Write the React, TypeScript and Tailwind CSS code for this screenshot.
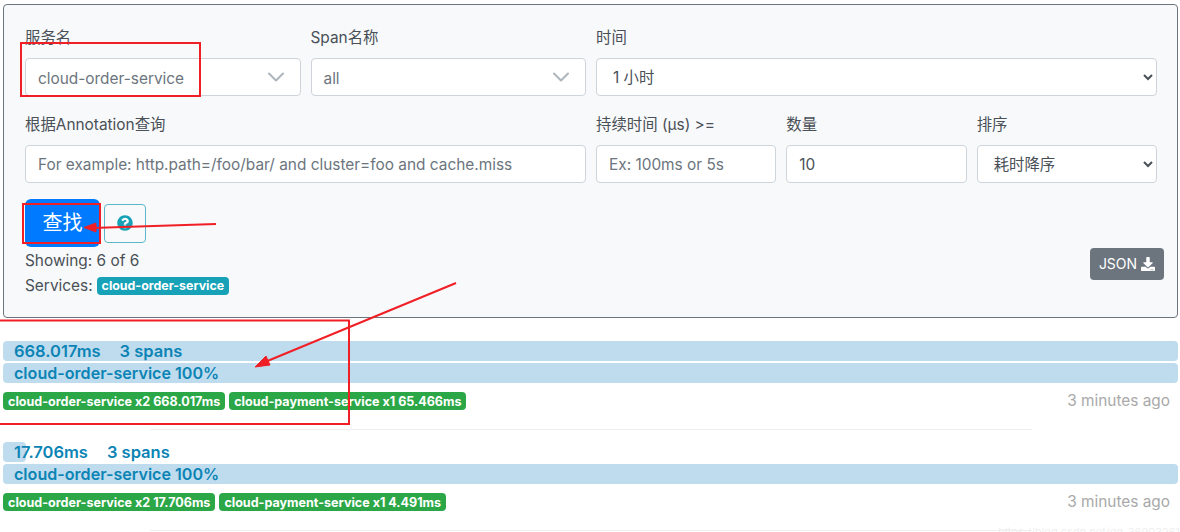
import { ChevronDown } from 'lucide-react';
import { FaDownload, FaQuestionCircle } from 'react-icons/fa';

const font = { fontFamily: 'Inter, "Noto Sans CJK SC", sans-serif' };

const inputClass =
  'h-[38px] w-full rounded border border-[#ced4da] bg-white px-3 text-[15.4px] text-[#495057] placeholder:text-[#6c757d] outline-none';

const traces = [
  {
    duration: '668.017ms',
    width: '100%',
    badges: ['cloud-order-service x2 668.017ms', 'cloud-payment-service x1 65.466ms'],
  },
  {
    duration: '17.706ms',
    width: '23px',
    badges: ['cloud-order-service x2 17.706ms', 'cloud-payment-service x1 4.491ms'],
  },
];

function Label({ children }: { children: string }) {
  return <label className="mb-2 block h-6 text-[15.4px] leading-6 text-[#495057]">{children}</label>;
}

function ComboBox({ value }: { value: string }) {
  return (
    <div className="flex h-[38px] items-center justify-between rounded border border-[#ced4da] bg-white pl-3 pr-[10px] text-[15.4px] text-[#6c757d]">
      <span className="pt-[3px]">{value}</span>
      <ChevronDown className="h-7 w-7 text-[#adb5bd]" strokeWidth={1.75} />
    </div>
  );
}

function TraceRow({ trace }: { trace: (typeof traces)[number] }) {
  return (
    <div className="relative h-[101px] pt-[23px]">
      <div className="relative ml-[3px] mr-[2px] h-5 text-[16.5px] font-semibold leading-5 text-[#0b84b5]">
        <div className="absolute inset-y-0 left-0 rounded bg-[#bfdcee]" style={{ width: trace.width }} />
        <div className="relative flex gap-[19px] pl-[11px]">
          <span>{trace.duration}</span>
          <span>3 spans</span>
        </div>
      </div>
      <div className="ml-[3px] mr-[2px] mt-[2px] h-5 rounded bg-[#bfdcee] pl-[11px] text-[16.1px] font-semibold leading-5 text-[#0b84b5]">
        cloud-order-service 100%
      </div>
      <div className="ml-[3px] mr-[2px] mt-[9px] flex items-start justify-between">
        <div className="flex gap-1">
          {trace.badges.map((badge) => (
            <span
              key={badge}
              className="h-[18px] rounded bg-[#2ca748] px-[5px] text-[12.55px] font-bold leading-[19px] text-white"
            >
              {badge}
            </span>
          ))}
        </div>
        <span className="mr-2 mt-[-3px] text-[15.4px] text-[#a9a9a9]">3 minutes ago</span>
      </div>
      <div className="absolute bottom-[-11px] left-[150px] h-px w-[882px] bg-[#eeeeee]" />
    </div>
  );
}

export default function App() {
  return (
    <div className="relative h-[532px] w-[1180px] overflow-hidden bg-white" style={font}>
      <div className="pl-[3px] pr-[2px] pt-1">
        <div className="h-[314px] rounded border border-[#6c757d] bg-[#f8f9fa] pl-[21px] pr-[20px] pt-[21px]">
          <div className="grid grid-cols-12 gap-x-[10px] gap-y-[17px]">
            <div className="col-span-3">
              <Label>服务名</Label>
              <ComboBox value="cloud-order-service" />
            </div>
            <div className="col-span-3">
              <Label>Span名称</Label>
              <ComboBox value="all" />
            </div>
            <div className="col-span-6">
              <Label>时间</Label>
              <select className={inputClass} defaultValue="1h">
                <option value="1h">1 小时</option>
              </select>
            </div>
            <div className="col-span-6">
              <Label>根据Annotation查询</Label>
              <input className={inputClass} placeholder="For example: http.path=/foo/bar/ and cluster=foo and cache.miss" />
            </div>
            <div className="col-span-2">
              <Label>持续时间 (μs) &gt;=</Label>
              <input className={inputClass} placeholder="Ex: 100ms or 5s" />
            </div>
            <div className="col-span-2">
              <Label>数量</Label>
              <input className={inputClass} defaultValue="10" />
            </div>
            <div className="col-span-2">
              <Label>排序</Label>
              <select className={inputClass} defaultValue="desc">
                <option value="desc">耗时降序</option>
              </select>
            </div>
          </div>

          <div className="mt-4 flex items-center gap-1">
            <button className="h-12 w-[75px] rounded-md bg-[#007bff] text-xl text-white">查找</button>
            <button className="flex h-[39px] w-[42px] items-center justify-center rounded border border-[#5ab9c9] text-[#17a2b8]">
              <FaQuestionCircle className="h-4 w-4" />
            </button>
          </div>

          <div className="mt-px flex items-start justify-between">
            <div className="text-[15.4px] leading-[25px] text-[#495057]">
              <div>Showing: 6 of 6</div>
              <div className="flex items-center gap-[4px]">
                <span>Services:</span>
                <span className="h-[18px] rounded bg-[#17a2b8] px-[5px] text-[12.4px] font-bold leading-[18px] text-white">
                  cloud-order-service
                </span>
              </div>
            </div>
            <button className="mr-[-7px] flex h-8 w-[74px] items-center justify-center gap-1 rounded bg-[#6c757d] text-sm text-white">
              JSON
              <FaDownload className="h-[14px] w-[14px]" />
            </button>
          </div>
        </div>
      </div>

      {traces.map((trace) => (
        <TraceRow key={trace.duration} trace={trace} />
      ))}

      {/* red markup drawn over the screenshot */}
      <svg className="absolute left-0 top-0" width="1180" height="532" fill="none" stroke="#f01f26" strokeWidth="2">
        <rect x="21" y="43" width="179" height="53" />
        <rect x="23" y="204" width="77" height="39" />
        <path d="M-2 320.500H349V424H-2" />
        <path d="M216 224L92 228" />
        <path d="M84 227.500L96 223L96 232Z" fill="#f01f26" strokeWidth="1" />
        <path d="M456 283L265 362" />
        <path d="M255 367L266 356L270 365Z" fill="#f01f26" strokeWidth="1" />
      </svg>

      {/* faint watermark, cut off by the bottom edge */}
      <span className="absolute right-0 top-[524px] whitespace-nowrap text-[11px] text-[#efefef]">
        https://blog.csdn.net/qq_36903261
      </span>
    </div>
  );
}
